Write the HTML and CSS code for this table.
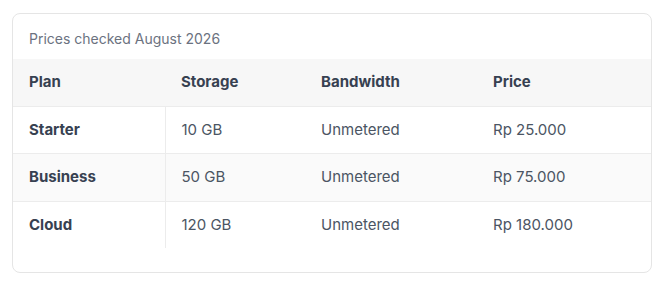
FILE: index.html
```html
<!DOCTYPE html>
<html>
  <head>
    <title>Hosting plans</title>
    <meta name="viewport" content="width=device-width, initial-scale=1" />
    <link rel="stylesheet" href="styles.css">
  </head>
  <body>
    <div class="card">
      <p class="note">Prices checked August 2026</p>
      <table class="plans">
        <thead>
          <tr>
            <th class="col-plan">Plan</th>
            <th class="col-storage">Storage</th>
            <th class="col-bandwidth">Bandwidth</th>
            <th>Price</th>
          </tr>
        </thead>
        <tbody>
          <tr>
            <td>Starter</td>
            <td>10 GB</td>
            <td>Unmetered</td>
            <td>Rp 25.000</td>
          </tr>
          <tr>
            <td>Business</td>
            <td>50 GB</td>
            <td>Unmetered</td>
            <td>Rp 75.000</td>
          </tr>
          <tr>
            <td>Cloud</td>
            <td>120 GB</td>
            <td>Unmetered</td>
            <td>Rp 180.000</td>
          </tr>
        </tbody>
      </table>
    </div>
  </body>
</html>
```

FILE: styles.css
```css
body {
  margin: 0;
  padding: 13px 12px;
  font-family: Inter, "Noto Sans", sans-serif;
  font-size: 15px;
  color: #4b5563;
  background-color: #fff;
}
/* Card around the table */
.card {
  width: 640px;
  box-sizing: border-box;
  border: 1px solid #e5e5e5;
  border-radius: 8px;
  padding-bottom: 24px;
  overflow: hidden;
}
.note {
  margin: 0;
  padding: 14px 16px 10px;
  font-size: 14px;
  line-height: 21px;
  color: #6b7280;
}
/* Table */
.plans {
  width: 100%;
  border-collapse: collapse;
  table-layout: fixed;
}
.plans th,
.plans td {
  box-sizing: border-box;
  padding: 12px 16px;
  line-height: 1.5;
  text-align: left;
  white-space: nowrap;
}
.plans th {
  font-weight: 700;
  color: #374151;
  background-color: #f7f7f7;
  border-bottom: 1px solid #ececec;
}
.plans td:first-child {
  font-weight: 700;
  color: #374151;
  border-right: 1px solid #ececec;
}
.plans tbody tr {
  border-bottom: 1px solid #ececec;
}
.plans tbody tr:last-child {
  border-bottom: none;
}
.plans tbody tr:nth-child(even) {
  background-color: #fafafa;
}
.col-plan {
  width: 152px;
}
.col-storage {
  width: 140px;
}
.col-bandwidth {
  width: 172px;
}
```
